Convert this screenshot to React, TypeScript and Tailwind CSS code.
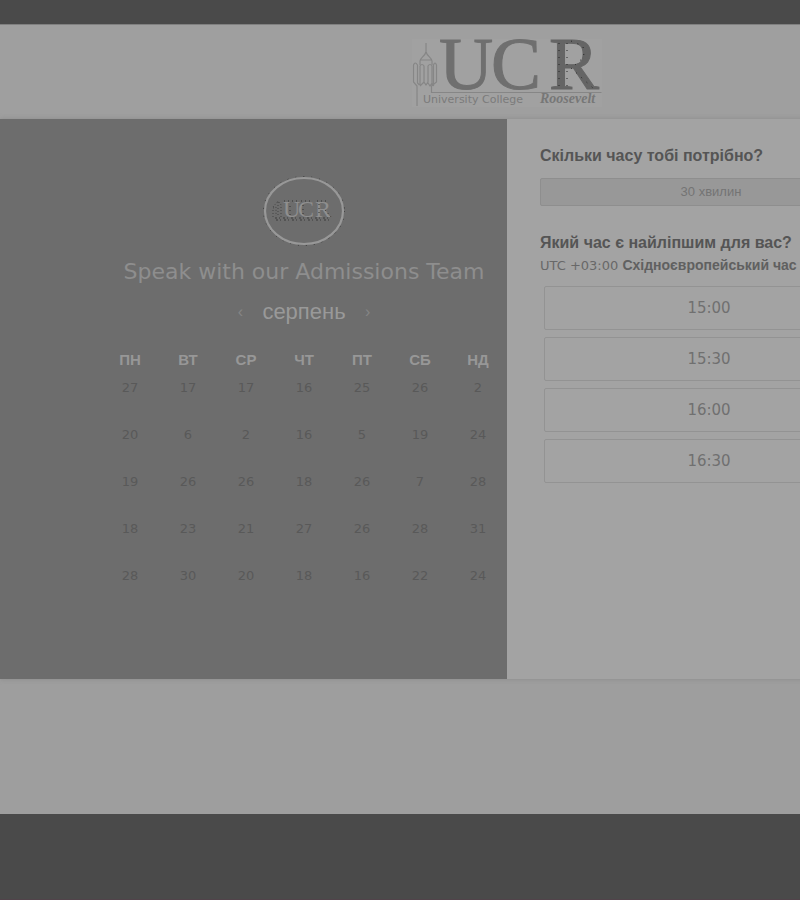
import React from "react";

const weekdays = ["ПН", "ВТ", "СР", "ЧТ", "ПТ", "СБ", "НД"];
const weeks = [
  [27, 17, 17, 16, 25, 26, 2],
  [20, 6, 2, 16, 5, 19, 24],
  [19, 26, 26, 18, 26, 7, 28],
  [18, 23, 21, 27, 26, 28, 31],
  [28, 30, 20, 18, 16, 22, 24],
];
const times = ["15:00", "15:30", "16:00", "16:30"];

function UcrLogo() {
  return (
    <svg className="overflow-visible" width="190" height="68" viewBox="0 0 190 68" role="img" aria-label="University College Roosevelt">
      <rect width="190" height="68" fill="#a1a1a1" />
      <g fill="none" stroke="#868686" strokeWidth="1.200">
        <path d="M14 4v9M14 13c-1 4-6 6-6 9v4M14 13c1 4 6 6 6 9v4M8 21h12" />
        <path d="M5 67V47L1.500 43V26q1.500-4 4 0v18l2 2M8 46V27q2-3 4 0v16l2 3 2-3V27q2-3 4 0v17l-2 3-2-3M8 47l4-4M20 46V34M20 44l1.500 3V26q1.500-4 3 0v17l-5 4v6.500h170" />
      </g>
      <g fontFamily="'Liberation Serif', serif" fontSize="75" fill="#6f6f6f">
        <text x="27" y="50" stroke="#6f6f6f" strokeWidth="1">U</text>
        <text x="79" y="50" stroke="#6f6f6f" strokeWidth="1">C</text>
        <text x="137" y="50" fill="#656565" stroke="#656565" strokeWidth="1">R</text>
      </g>
      <path d="M147 4v44M155 4v44M159 2l12 5 1 11-9 8M159 29l22 20" fill="none" stroke="#262626" strokeWidth="1" strokeDasharray="1 6" />
      <text x="11" y="64" fontFamily="'DejaVu Sans', sans-serif" fontSize="11" fill="#7b7b7b">University College</text>
      <text x="128" y="64" fontFamily="'Liberation Serif', serif" fontSize="14" fontWeight="bold" fontStyle="italic" fill="#777777">Roosevelt</text>
    </svg>
  );
}

function Emblem() {
  return (
    <svg width="82" height="70" viewBox="0 0 82 70" role="img" aria-label="UCR">
      <ellipse cx="41" cy="35" rx="40.500" ry="34.500" fill="none" stroke="#353535" strokeWidth="1" strokeDasharray="1 7" />
      <ellipse cx="41" cy="35" rx="39" ry="33" fill="none" stroke="#989898" strokeWidth="2.200" />
      <g fontFamily="'Liberation Serif', serif" fontSize="24" fill="#8f8f8f">
        <text x="20" y="41">U</text>
        <text x="35" y="41">C</text>
        <text x="52" y="41">R</text>
      </g>
      <path d="M21 25h14M38 25h10M54 25h10M27 30v9M40 29v9M56 28v12M62 34l7 8" fill="none" stroke="#333333" strokeDasharray="1 3" />
      <path d="M10 41V32l3-1v9m2-14v15m3 0V31M10 31l5-6 4 5" fill="none" stroke="#444444" strokeDasharray="1 2" />
      <path d="M12 42h56M13 44h54" fill="none" stroke="#3c3c3c" strokeDasharray="2 2 1 3" />
    </svg>
  );
}

function Calendar() {
  return (
    <section className="flex w-1/2 justify-end bg-[#6d6d6d]">
      <div className="flex w-[406px] flex-col items-center pt-[57px]">
        <Emblem />
        <h1 className="mt-[10px] h-9 whitespace-nowrap font-['DejaVu_Sans',sans-serif] text-[22px] leading-8 text-[#8e8e8e]">
          Speak with our Admissions Team
        </h1>
        <div className="mt-[2px] flex h-9 items-center gap-4 font-['Liberation_Sans',sans-serif] text-[#999999]">
          <button aria-label="Попередній місяць" className="w-3 text-[16px] text-[#858585]">‹</button>
          <h2 className="text-[22px] leading-8">серпень</h2>
          <button aria-label="Наступний місяць" className="w-3 text-[16px] text-[#858585]">›</button>
        </div>
        <table className="mt-5 w-full table-fixed border-collapse text-center">
          <thead>
            <tr className="h-7 align-top font-['Liberation_Sans',sans-serif] text-[15px] leading-5 text-[#979797]">
              {weekdays.map((d) => <th key={d} className="p-0 font-bold">{d}</th>)}
            </tr>
          </thead>
          <tbody className="font-['DejaVu_Sans',sans-serif] text-[13px] leading-5 text-[#595959]">
            {weeks.map((week, i) => (
              <tr key={i} className="h-[47px] align-top">
                {week.map((day, j) => (
                  <td key={j} className="p-0"><button>{day}</button></td>
                ))}
              </tr>
            ))}
          </tbody>
        </table>
      </div>
    </section>
  );
}

function Availability() {
  return (
    <section className="w-1/2 bg-[#a3a3a3] pl-[33px] pt-[25px] font-['Liberation_Sans',sans-serif] text-[#555555]">
      <div className="w-[342px]">
        <h2 className="whitespace-nowrap text-[16px] font-bold leading-6">Скільки часу тобі потрібно?</h2>
        <button className="mt-[10px] h-7 w-full rounded-xs border border-[#8e8e8e] bg-[#989898] text-[13px] text-[#747474]">
          30 хвилин
        </button>
        <h2 className="mt-[25px] whitespace-nowrap text-[16px] font-bold leading-6">Який час є найліпшим для вас?</h2>
        <p className="whitespace-nowrap text-[14px] leading-5 text-[#686868]">
          <span className="font-['DejaVu_Sans',sans-serif] text-[13px]">UTC +03:00 </span>
          <b className="text-[#606060]">Східноєвропейський час</b>
        </p>
        <ul className="mt-[10px] flex flex-col gap-[7px] pl-1 pr-2">
          {times.map((time) => (
            <li key={time}>
              <button className="block h-11 w-full rounded-xs border border-[#939393] font-['DejaVu_Sans',sans-serif] text-[15px] text-[#707070]">
                {time}
              </button>
            </li>
          ))}
        </ul>
      </div>
    </section>
  );
}

export default function App() {
  return (
    <div className="overflow-hidden bg-[#9e9e9e]">
      <div className="flex min-h-screen min-w-[1014px] flex-col">
        <div className="h-6 bg-[#4a4a4a]" />
        <header className="flex h-[95px] justify-center border-t border-[#808080] bg-[#9f9f9f] pt-[14px]">
          <UcrLogo />
        </header>
        <main className="flex min-h-[560px] shadow-[0_0_5px_#8b8b8b]">
          <Calendar />
          <Availability />
        </main>
        <div className="min-h-[135px] grow" />
        <footer className="h-[86px] border-b border-[#51434a] bg-[#4a4a4a]" />
      </div>
    </div>
  );
}
